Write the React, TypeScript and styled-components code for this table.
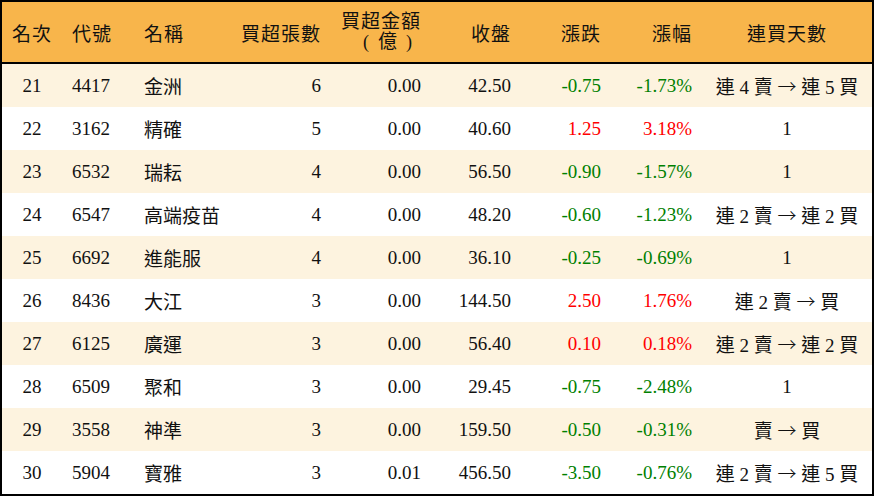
import React from 'react';
import styled, { createGlobalStyle } from 'styled-components';

type Align = 'left' | 'right' | 'center';
type Trend = 'up' | 'down' | 'flat';

interface Stock {
  rank: number;
  code: string;
  name: string;
  lots: number;
  amount: string;
  close: string;
  change: string;
  pct: string;
  streak: string;
}

const rows: Stock[] = [
  { rank: 21, code: '4417', name: '金洲', lots: 6, amount: '0.00', close: '42.50', change: '-0.75', pct: '-1.73%', streak: '連 4 賣 → 連 5 買' },
  { rank: 22, code: '3162', name: '精確', lots: 5, amount: '0.00', close: '40.60', change: '1.25', pct: '3.18%', streak: '1' },
  { rank: 23, code: '6532', name: '瑞耘', lots: 4, amount: '0.00', close: '56.50', change: '-0.90', pct: '-1.57%', streak: '1' },
  { rank: 24, code: '6547', name: '高端疫苗', lots: 4, amount: '0.00', close: '48.20', change: '-0.60', pct: '-1.23%', streak: '連 2 賣 → 連 2 買' },
  { rank: 25, code: '6692', name: '進能服', lots: 4, amount: '0.00', close: '36.10', change: '-0.25', pct: '-0.69%', streak: '1' },
  { rank: 26, code: '8436', name: '大江', lots: 3, amount: '0.00', close: '144.50', change: '2.50', pct: '1.76%', streak: '連 2 賣 → 買' },
  { rank: 27, code: '6125', name: '廣運', lots: 3, amount: '0.00', close: '56.40', change: '0.10', pct: '0.18%', streak: '連 2 賣 → 連 2 買' },
  { rank: 28, code: '6509', name: '聚和', lots: 3, amount: '0.00', close: '29.45', change: '-0.75', pct: '-2.48%', streak: '1' },
  { rank: 29, code: '3558', name: '神準', lots: 3, amount: '0.00', close: '159.50', change: '-0.50', pct: '-0.31%', streak: '賣 → 買' },
  { rank: 30, code: '5904', name: '寶雅', lots: 3, amount: '0.01', close: '456.50', change: '-3.50', pct: '-0.76%', streak: '連 2 賣 → 連 5 買' },
];

const trendOf = (v: string): Trend => (v.startsWith('-') ? 'down' : v === '0.00' ? 'flat' : 'up');

// split the streak text so the arrow gets the wide CJK glyph
const renderStreak = (s: string) => {
  const parts = s.split('→');
  if (parts.length < 2) return s;
  return (
    <>
      {parts[0]}
      <Arrow>→</Arrow>
      {parts[1]}
    </>
  );
};

const App: React.FC = () => (
  <>
    <GlobalStyle />
    <Board>
      <HeadRow>
        <HeadCell align="center">名次</HeadCell>
        <HeadCell align="left">代號</HeadCell>
        <HeadCell align="left">名稱</HeadCell>
        <HeadCell align="right">買超張數</HeadCell>
        <HeadCell align="right" $stacked>
          <HeadLine>買超金額</HeadLine>
          <HeadLine>
            <Paren>(</Paren>億<Paren>)</Paren>
          </HeadLine>
        </HeadCell>
        <HeadCell align="right">收盤</HeadCell>
        <HeadCell align="right">漲跌</HeadCell>
        <HeadCell align="right">漲幅</HeadCell>
        <HeadCell align="center">連買天數</HeadCell>
      </HeadRow>
      {rows.map((r, i) => (
        <Row key={r.rank} $striped={i % 2 === 0}>
          <Cell align="center">{r.rank}</Cell>
          <Cell align="left">{r.code}</Cell>
          <Cell align="left">{r.name}</Cell>
          <Cell align="right">{r.lots}</Cell>
          <Cell align="right">{r.amount}</Cell>
          <Cell align="right">{r.close}</Cell>
          <Cell align="right" $trend={trendOf(r.change)}>{r.change}</Cell>
          <Cell align="right" $trend={trendOf(r.change)}>{r.pct}</Cell>
          <Cell align="center">{renderStreak(r.streak)}</Cell>
        </Row>
      ))}
    </Board>
  </>
);

// Styles
const GlobalStyle = createGlobalStyle`
  body {
    margin: 0;
    background: #fff;
    font-family: "Liberation Serif", "Noto Sans CJK TC", serif;
  }
`;

const Board = styled.div`
  box-sizing: border-box;
  width: 874px;
  height: 496px;
  border: 2px solid #000;
  display: flex;
  flex-direction: column;
  color: #111;
  font-size: 19px;
`;

const columns = '60px 72px 100px 97px 100px 90px 90px 91px 170px';

const HeadRow = styled.div`
  display: grid;
  grid-template-columns: ${columns};
  height: 60px;
  align-items: center;
  background: #f8b54b;
  border-bottom: 2px solid #000;
`;

const Row = styled.div<{ $striped: boolean }>`
  display: grid;
  grid-template-columns: ${columns};
  height: 43px;
  align-items: center;
  background: ${(p) => (p.$striped ? '#fdf3df' : '#fff')};
`;

const Cell = styled.div<{ align: Align; $trend?: Trend }>`
  text-align: ${(p) => p.align};
  padding: ${(p) => (p.align === 'left' ? '0 0 0 10px' : p.align === 'right' ? '0 10px 0 0' : '0')};
  white-space: nowrap;
  color: ${(p) => (p.$trend === 'down' ? '#008000' : p.$trend === 'up' ? '#f00' : 'inherit')};
`;

const HeadCell = styled(Cell)<{ $stacked?: boolean }>`
  color: #111;
  letter-spacing: 1px;
  display: ${(p) => (p.$stacked ? 'flex' : 'block')};
  flex-direction: column;
  align-items: flex-end;
`;

const HeadLine = styled.div`
  height: 20px;
  line-height: 20px;
`;

const Paren = styled.span`
  font-family: "Liberation Serif", serif;
  font-size: 18px;
  line-height: 1;
  margin: 0 8px;
`;

const Arrow = styled.span`
  font-family: "Noto Sans CJK TC", sans-serif;
  font-weight: 300;
`;

export default App;
